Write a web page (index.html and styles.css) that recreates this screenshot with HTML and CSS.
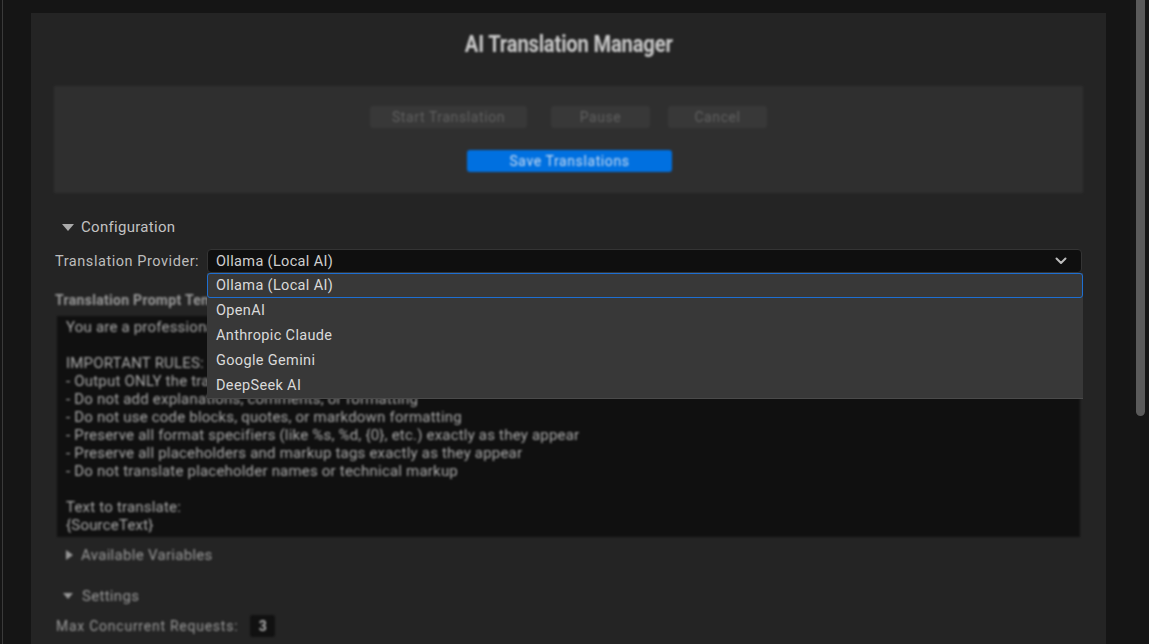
FILE: index.html
```html
<!DOCTYPE html>
<html>
<head>
<meta charset="utf-8">
<link rel="stylesheet" href="styles.css">
</head>
<body>
<div class="app">
  <div class="edge"></div>
  <main class="panel">
    <h1 class="title blur"><span class="title-text">AI Translation Manager</span></h1>
    <section class="toolbar blur">
      <div class="btn-row">
        <button class="btn btn-start">Start Translation</button>
        <button class="btn btn-pause">Pause</button>
        <button class="btn btn-cancel">Cancel</button>
      </div>
      <div class="btn-row">
        <button class="btn btn-save">Save Translations</button>
      </div>
    </section>

    <div class="section-head config-head"><span class="tri-down"></span>Configuration</div>

    <div class="provider-row">
      <span class="label">Translation Provider:</span>
      <div class="select-wrap">
        <div class="select">
          <span>Ollama (Local AI)</span>
          <svg class="chev" width="12" height="8" viewBox="0 0 12 8"><path d="M1.5 1.5 L6 6 L10.5 1.5" fill="none" stroke="#bdbdbd" stroke-width="2" stroke-linecap="round" stroke-linejoin="round"/></svg>
        </div>
        <ul class="dropdown">
          <li class="opt active">Ollama (Local AI)</li>
          <li class="opt">OpenAI</li>
          <li class="opt">Anthropic Claude</li>
          <li class="opt">Google Gemini</li>
          <li class="opt">DeepSeek AI</li>
        </ul>
      </div>
    </div>

    <div class="prompt blur">
      <div class="prompt-label">Translation Prompt Template:</div>
      <div class="textarea">You are a professional translator. Translate the following text from {SourceLanguage} to {TargetLanguage}.

IMPORTANT RULES:
- Output ONLY the translated text, nothing else
- Do not add explanations, comments, or formatting
- Do not use code blocks, quotes, or markdown formatting
- Preserve all format specifiers (like %s, %d, {0}, etc.) exactly as they appear
- Preserve all placeholders and markup tags exactly as they appear
- Do not translate placeholder names or technical markup

Text to translate:
{SourceText}</div>
      <div class="section-head vars-head"><span class="tri-right"></span>Available Variables</div>
      <div class="section-head settings-head"><span class="tri-down"></span>Settings</div>
      <div class="setting-row">
        <span class="label">Max Concurrent Requests:</span>
        <span class="num">3</span>
      </div>
    </div>
  </main>
  <div class="track"><div class="thumb"></div></div>
</div>
</body>
</html>
```

FILE: styles.css
```css
* { box-sizing: border-box; }
html, body {
  margin: 0;
  padding: 0;
  background: #151515;
  font-family: Roboto, "Noto Sans", sans-serif;
  color: #c4c4c4;
}
.app {
  display: flex;
  height: 644px;
  overflow: hidden;
}
.edge {
  width: 1px;
  margin-left: 2px;
  background: #3a3a3a;
  flex: none;
}
.panel {
  flex: none;
  width: 1075px;
  margin-left: 28px;
  margin-top: 13px;
  background: #242424;
  padding: 0 23px;
  height: 700px;
}
.track {
  flex: none;
  width: 9px;
  margin-left: 30px;
}
.thumb {
  height: 416px;
  background: #5a5a5a;
  border-radius: 0 0 5px 5px;
}
.blur { filter: blur(1.3px); }

.title {
  margin: 0;
  padding-top: 16px;
  height: 46px;
  font-size: 24px;
  line-height: 30px;
  font-weight: 700;
  text-align: center;
  color: #c9c9c9;
}
.title-text {
  display: inline-block;
  transform: scaleX(0.84);
  letter-spacing: -0.2px;
}
.toolbar {
  margin-top: 27px;
  height: 107px;
  background: #2f2f2f;
  padding-top: 20px;
  display: flex;
  flex-direction: column;
  align-items: center;
  gap: 22px;
}
.btn-row {
  display: flex;
  justify-content: center;
}
.btn {
  height: 22px;
  border: none;
  border-radius: 3px;
  font-family: Roboto, sans-serif;
  font-size: 14px;
  letter-spacing: 0.6px;
  padding: 0;
  background: #383838;
  color: #606060;
}
.btn-start { width: 157px; }
.btn-pause { width: 99px; margin-left: 24px; }
.btn-cancel { width: 99px; margin-left: 18px; }
.btn-save {
  width: 205px;
  background: #0070e0;
  color: #c9dcf2;
  margin-left: 2px;
}

.section-head {
  display: flex;
  align-items: center;
  height: 20px;
  font-size: 15px;
  letter-spacing: 0.3px;
  color: #c2c2c2;
}
.config-head {
  margin-top: 24px;
  padding-left: 8px;
}
.tri-down {
  width: 0; height: 0;
  border-left: 6px solid transparent;
  border-right: 6px solid transparent;
  border-top: 7px solid #aaaaaa;
  margin-right: 7px;
}
.tri-right {
  width: 0; height: 0;
  border-top: 5px solid transparent;
  border-bottom: 5px solid transparent;
  border-left: 7px solid #aaaaaa;
  margin-right: 8px;
}

.provider-row {
  margin-top: 12px;
  display: flex;
  align-items: center;
  padding-left: 1px;
}
.label {
  font-size: 14.5px;
  letter-spacing: 0.55px;
  color: #bdbdbd;
  width: 152px;
  flex: none;
}
.select-wrap {
  position: relative;
  flex: 1;
  margin-right: 1px;
}
.select {
  height: 24px;
  background: #0f0f0f;
  border: 1px solid #343434;
  border-radius: 4px;
  display: flex;
  align-items: center;
  justify-content: space-between;
  padding: 0 14px 0 8px;
  font-size: 14.5px;
  letter-spacing: 0.35px;
  color: #cfcfcf;
}
.chev { display: block; }
.dropdown {
  position: absolute;
  left: 0;
  right: -1px;
  top: 24px;
  margin: 0;
  padding: 0;
  list-style: none;
  background: #383838;
  border-bottom: 1px solid #4a4a4a;
  z-index: 5;
}
.opt {
  height: 25px;
  line-height: 25px;
  padding-left: 9px;
  font-size: 14.5px;
  letter-spacing: 0.35px;
  color: #dadada;
}
.opt.active {
  border: 1px solid #1e6fd2;
  border-radius: 3px;
  line-height: 23px;
  padding-left: 8px;
}

.prompt {
  padding-top: 19px;
}
.prompt-label {
  font-size: 14px;
  font-weight: 700;
  letter-spacing: 0.3px;
  color: #9a9a9a;
  height: 16px;
  line-height: 16px;
  padding-left: 1px;
}
.textarea {
  margin: 8px 3px 0 3px;
  height: 221px;
  background: #101010;
  padding: 2px 9px;
  white-space: pre-wrap;
  font-size: 15px;
  letter-spacing: 0.2px;
  line-height: 18px;
  color: #a9a9a9;
  overflow: hidden;
}
.vars-head {
  margin-top: 8px;
  padding-left: 12px;
  color: #9a9a9a;
}
.vars-head .tri-right { border-left-color: #999; }
.settings-head {
  margin-top: 21px;
  padding-left: 9px;
  color: #9a9a9a;
}
.settings-head .tri-down {
  border-left-width: 5px;
  border-right-width: 5px;
  border-top-width: 6px;
  border-top-color: #999;
  margin-right: 9px;
}
.setting-row {
  display: flex;
  align-items: center;
  margin-top: 9px;
  padding-left: 2px;
}
.setting-row .label {
  width: auto;
  font-size: 14px;
  letter-spacing: 0.75px;
  color: #9a9a9a;
  margin-right: 12px;
}
.num {
  width: 25px;
  height: 22px;
  background: #111;
  border-radius: 3px;
  display: flex;
  align-items: center;
  justify-content: center;
  font-size: 14px;
  font-weight: 700;
  color: #b0b0b0;
}
```
